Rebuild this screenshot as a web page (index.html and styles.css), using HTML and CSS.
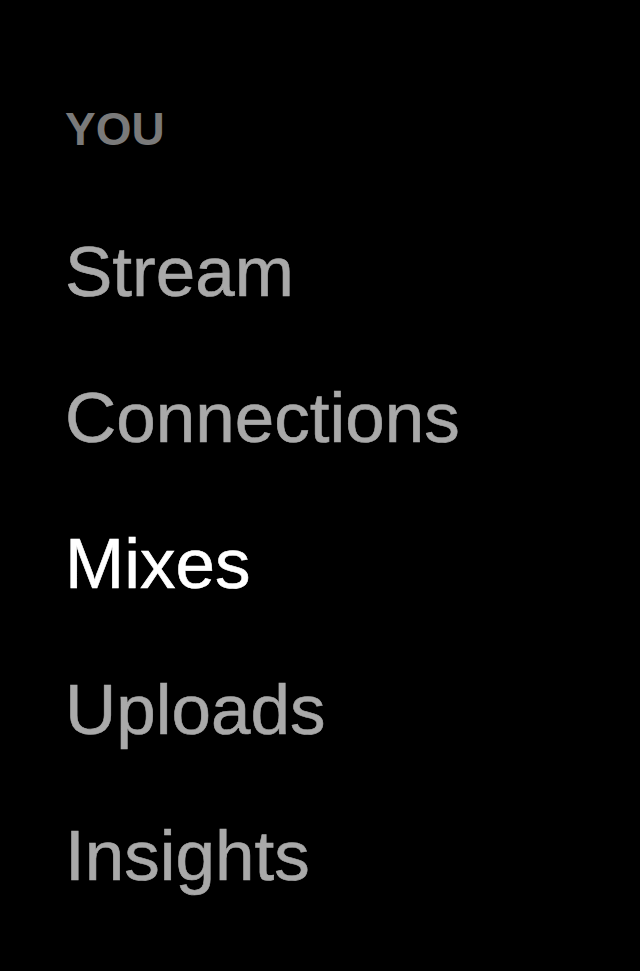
FILE: index.html
```html
<!DOCTYPE html>
<html>
<head>
<meta charset="utf-8">
<link rel="stylesheet" href="styles.css">
</head>
<body>
<nav class="menu">
  <div class="menu-title">YOU</div>
  <ul class="menu-list">
    <li class="menu-item">Stream</li>
    <li class="menu-item">Connections</li>
    <li class="menu-item active">Mixes</li>
    <li class="menu-item">Uploads</li>
    <li class="menu-item">Insights</li>
  </ul>
</nav>
</body>
</html>
```
FILE: styles.css
```css
html, body {
  margin: 0;
  padding: 0;
  background: #000;
  height: 100%;
}
body {
  font-family: "Liberation Sans", Arial, sans-serif;
}
.menu {
  padding: 106px 0 0 65px;
}
.menu-title {
  font-size: 46px;
  line-height: 46px;
  font-weight: bold;
  color: #7a7a7a;
  margin-bottom: 47px;
}
.menu-list {
  list-style: none;
  margin: 0;
  padding: 0;
}
.menu-item {
  font-size: 71px;
  line-height: 146px;
  color: #a9a9a9;
  -webkit-text-stroke: 0.6px currentColor;
}
.menu-item.active {
  color: #fff;
}
```
